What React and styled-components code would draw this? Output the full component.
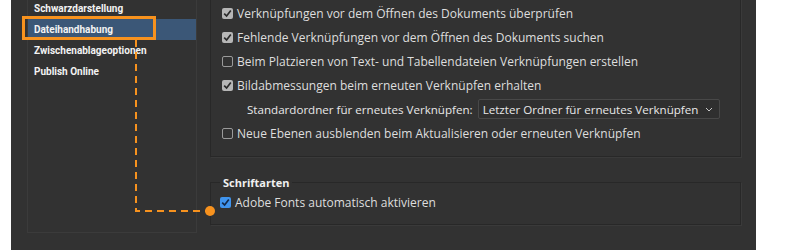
import React from 'react'
import styled, { createGlobalStyle } from 'styled-components'

const GlobalStyle = createGlobalStyle`
  html, body {
    margin: 0;
    padding: 0;
    background: #ffffff;
  }
  body {
    font-family: 'Open Sans', 'Noto Sans', sans-serif;
  }
`

const categories = ['Schwarzdarstellung', 'Dateihandhabung', 'Zwischenablageoptionen', 'Publish Online']

const options = [
  { label: 'Verknüpfungen vor dem Öffnen des Dokuments überprüfen', checked: true },
  { label: 'Fehlende Verknüpfungen vor dem Öffnen des Dokuments suchen', checked: true },
  { label: 'Beim Platzieren von Text- und Tabellendateien Verknüpfungen erstellen', checked: false },
  { label: 'Bildabmessungen beim erneuten Verknüpfen erhalten', checked: true },
]

const Check = ({ checked, accent }) => (
  <Box checked={checked} accent={accent}>
    {checked && (
      <svg width="9" height="9" viewBox="0 0 9 9">
        <path d="M1.2 4.6 L3.6 7 L7.8 1.6" fill="none" stroke={accent ? '#13294a' : '#2a2a2a'} strokeWidth="1.7" />
      </svg>
    )}
  </Box>
)

export default function App() {
  return (
    <>
      <GlobalStyle />
      <Window>
        <Sidebar>
          <List>
            {categories.map(c => (
              <Item key={c} active={c === 'Dateihandhabung'}>{c}</Item>
            ))}
          </List>
        </Sidebar>
        <Main>
          <Group>
            {options.map(o => (
              <Row key={o.label}>
                <Check checked={o.checked} />
                <span>{o.label}</span>
              </Row>
            ))}
            <FolderRow>
              <span>Standardordner für erneutes Verknüpfen:</span>
              <Select>
                Letzter Ordner für erneutes Verknüpfen
                <svg width="8" height="5" viewBox="0 0 8 5">
                  <path d="M1 1 L4 4 L7 1" fill="none" stroke="#c8c8c8" strokeWidth="1" />
                </svg>
              </Select>
            </FolderRow>
            <Row>
              <Check checked={false} />
              <span>Neue Ebenen ausblenden beim Aktualisieren oder erneuten Verknüpfen</span>
            </Row>
          </Group>
          <Fieldset>
            <Legend>Schriftarten</Legend>
            <Row>
              <Check checked accent />
              <span>Adobe Fonts automatisch aktivieren</span>
            </Row>
          </Fieldset>
        </Main>
        <Callout width="745" height="250" viewBox="0 0 745 250">
          <rect x="12.5" y="17.5" width="131" height="21" fill="none" stroke="#f7921e" strokeWidth="3" />
          <path d="M125 40 V211 H199" fill="none" stroke="#f7921e" strokeWidth="2" strokeDasharray="7 5" />
          <circle cx="199" cy="211" r="5" fill="#f7921e" />
        </Callout>
      </Window>
    </>
  )
}

const Window = styled.div`
  position: relative;
  display: flex;
  margin-left: 11px;
  width: 745px;
  height: 250px;
  overflow: hidden;
  background: #323232;
  color: #dedede;
  font-size: 12px;
`

const Sidebar = styled.div`
  padding-left: 16px;
  width: 170px;
  flex-shrink: 0;
`

const List = styled.div`
  margin-top: -10px;
  height: 243px;
  box-sizing: border-box;
  padding-top: 8px;
  border: 1px solid #3b3b3b;
  border-top: none;
`

const Item = styled.div`
  height: 21px;
  line-height: 21px;
  padding-left: 6px;
  font-family: Roboto, 'Open Sans', sans-serif;
  font-size: 10px;
  font-weight: bold;
  color: #f2f2f2;
  background: ${p => (p.active ? '#3b5777' : 'transparent')};
`

const Main = styled.div`
  margin-left: 13px;
  width: 531px;
  display: flex;
  flex-direction: column;
`

const Group = styled.div`
  margin-top: -10px;
  padding: 11px 0 11px 11px;
  border: 1px solid #282828;
  border-top: none;
  box-shadow: 1px 1px 0 #3a3a3a;
  display: flex;
  flex-direction: column;
`

const Row = styled.label`
  display: flex;
  align-items: center;
  gap: 4px;
  height: 24px;
  white-space: nowrap;
`

const Box = styled.span`
  width: 11px;
  height: 11px;
  border-radius: 2px;
  display: inline-flex;
  align-items: center;
  justify-content: center;
  box-sizing: border-box;
  background: ${p => (p.accent ? '#3f94ee' : p.checked ? '#b6b6b6' : 'transparent')};
  border: ${p => (p.checked ? 'none' : '1px solid #9a9a9a')};
`

const FolderRow = styled.div`
  display: flex;
  align-items: center;
  gap: 5px;
  height: 24px;
  padding-left: 25px;
  font-size: 11.6px;
  color: #e8e8e8;
  white-space: nowrap;
`

const Select = styled.div`
  display: flex;
  align-items: center;
  gap: 7px;
  height: 20px;
  box-sizing: border-box;
  padding: 0 6px 0 4px;
  border: 1px solid #484848;
  border-radius: 2px;
  background: #2f2f2f;
`

const Fieldset = styled.fieldset`
  margin: 18px 0 0 0;
  padding: 0 0 10px 9px;
  border: 1px solid #282828;
  box-shadow: 1px 1px 0 #3a3a3a;
  min-width: 0;
`

const Legend = styled.legend`
  padding: 0 3px;
  height: 15px;
  line-height: 15px;
  font-weight: bold;
  font-size: 11px;
  color: #f0f0f0;
`

const Callout = styled.svg`
  position: absolute;
  left: 0;
  top: 0;
  pointer-events: none;
`
